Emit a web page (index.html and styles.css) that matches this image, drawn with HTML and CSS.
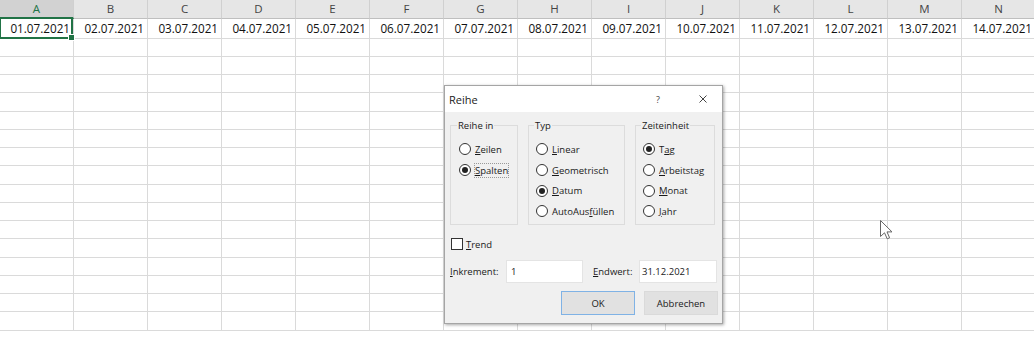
FILE: index.html
```html
<!DOCTYPE html>
<html lang="de">

<head>
    <meta charset="UTF-8">
    <meta name="viewport" content="width=device-width, initial-scale=1.0">
    <title>Reihe</title>
    <link rel="stylesheet" href="styles.css">
</head>

<body>
    <div class="sheet">
        <div class="row head">
            <div class="col-head active">A</div>
            <div class="col-head">B</div>
            <div class="col-head">C</div>
            <div class="col-head">D</div>
            <div class="col-head">E</div>
            <div class="col-head">F</div>
            <div class="col-head">G</div>
            <div class="col-head">H</div>
            <div class="col-head">I</div>
            <div class="col-head">J</div>
            <div class="col-head">K</div>
            <div class="col-head">L</div>
            <div class="col-head">M</div>
            <div class="col-head">N</div>
        </div>
        <div class="row first">
            <div class="cell">01.07.2021</div>
            <div class="cell">02.07.2021</div>
            <div class="cell">03.07.2021</div>
            <div class="cell">04.07.2021</div>
            <div class="cell">05.07.2021</div>
            <div class="cell">06.07.2021</div>
            <div class="cell">07.07.2021</div>
            <div class="cell">08.07.2021</div>
            <div class="cell">09.07.2021</div>
            <div class="cell">10.07.2021</div>
            <div class="cell">11.07.2021</div>
            <div class="cell">12.07.2021</div>
            <div class="cell">13.07.2021</div>
            <div class="cell">14.07.2021</div>
        </div>
        <div id="empty-rows"></div>
        <div class="selection"><span class="fill-handle"></span></div>
    </div>

    <div class="dialog">
        <div class="titlebar">
            <span class="title">Reihe</span>
            <span class="help">?</span>
            <span class="close">
                <svg width="8" height="8" viewBox="0 0 8 8">
                    <path d="M0.5 0.5 L7.5 7.5 M7.5 0.5 L0.5 7.5" stroke="#444" stroke-width="1" fill="none" />
                </svg>
            </span>
        </div>
        <div class="dialog-body">
            <div class="groups">
                <fieldset class="group group-in">
                    <legend>Reihe in</legend>
                    <div class="option"><span class="radio"></span><span><u>Z</u>eilen</span></div>
                    <div class="option"><span class="radio checked"></span><span class="focus"><u>S</u>palten</span></div>
                </fieldset>
                <fieldset class="group group-type">
                    <legend>Typ</legend>
                    <div class="option"><span class="radio"></span><span><u>L</u>inear</span></div>
                    <div class="option"><span class="radio"></span><span><u>G</u>eometrisch</span></div>
                    <div class="option"><span class="radio checked"></span><span><u>D</u>atum</span></div>
                    <div class="option"><span class="radio"></span><span>AutoAus<u>f</u>üllen</span></div>
                </fieldset>
                <fieldset class="group group-unit">
                    <legend>Zeiteinheit</legend>
                    <div class="option"><span class="radio checked"></span><span>T<u>a</u>g</span></div>
                    <div class="option"><span class="radio"></span><span><u>A</u>rbeitstag</span></div>
                    <div class="option"><span class="radio"></span><span><u>M</u>onat</span></div>
                    <div class="option"><span class="radio"></span><span><u>J</u>ahr</span></div>
                </fieldset>
            </div>
            <div class="trend"><span class="checkbox"></span><span><u>T</u>rend</span></div>
            <div class="fields">
                <span class="field-label label-inc"><u>I</u>nkrement:</span>
                <span class="input input-inc">1</span>
                <span class="field-label label-end"><u>E</u>ndwert:</span>
                <span class="input input-end">31.12.2021</span>
            </div>
            <div class="buttons">
                <button class="btn default">OK</button>
                <button class="btn">Abbrechen</button>
            </div>
        </div>
    </div>

    <svg class="cursor" width="13" height="20" viewBox="0 0 13 20">
        <path d="M0.5 0.5 L0.5 16.5 L4.5 12.8 L7.2 18.8 L9.6 17.8 L7 11.9 L12 11.9 Z" fill="#fff" stroke="#666" stroke-width="1" stroke-linejoin="round" />
    </svg>

    <script>
        // Fill the rest of the sheet with empty rows
        const emptyRows = document.getElementById('empty-rows');
        for (let r = 0; r < 16; r++) {
            const row = document.createElement('div');
            row.className = 'row';
            for (let c = 0; c < 14; c++) {
                const cell = document.createElement('div');
                cell.className = 'cell';
                row.appendChild(cell);
            }
            emptyRows.appendChild(row);
        }
    </script>
</body>

</html>
```

FILE: styles.css
```css
body {
    margin: 0;
    width: 1034px;
    height: 342px;
    overflow: hidden;
    background-color: #fff;
    font-family: "Open Sans", "Noto Sans", sans-serif;
    position: relative;
}

/* Spreadsheet */
.sheet {
    position: relative;
}

.row {
    display: flex;
    height: 18.27px;
}

.row.head {
    height: 19px;
}

.row.first {
    height: 19.5px;
}

.col-head,
.cell {
    flex: none;
    width: 74px;
    box-sizing: border-box;
    border-right: 1px solid #dadada;
    border-bottom: 1px solid #dadada;
}

.col-head {
    background-color: #e6e6e6;
    border-right-color: #d0d0d0;
    border-bottom-color: #bfbfbf;
    color: #444;
    font-size: 11.5px;
    line-height: 18px;
    text-align: center;
}

.col-head.active {
    background-color: #d2d2d2;
    color: #217346;
    border-bottom: 2px solid #217346;
    line-height: 17px;
}

.cell {
    font-size: 11.7px;
    line-height: 18px;
    text-align: right;
    padding-right: 3px;
    color: #111;
}

.selection {
    position: absolute;
    left: -1px;
    top: 17px;
    width: 74px;
    height: 22px;
    box-sizing: border-box;
    border: 2px solid #217346;
}

.fill-handle {
    position: absolute;
    right: -4px;
    bottom: -4px;
    width: 5px;
    height: 5px;
    background-color: #217346;
    border: 1px solid #fff;
}

/* Dialog */
.dialog {
    position: absolute;
    left: 444px;
    top: 85px;
    width: 279px;
    height: 239px;
    box-sizing: border-box;
    border: 1px solid #a5a5a5;
    background-color: #f0f0f0;
    box-shadow: 1px 1px 3px rgba(0, 0, 0, 0.35);
    font-size: 9.5px;
    color: #1a1a1a;
}

.titlebar {
    display: flex;
    align-items: center;
    height: 26px;
    background-color: #fff;
    padding-left: 4px;
}

.title {
    font-size: 11px;
    flex: 1;
}

.help {
    width: 20px;
    margin-right: 16px;
    text-align: center;
    font-size: 9px;
    color: #444;
}

.close {
    width: 38px;
    display: flex;
    justify-content: center;
}

.dialog-body {
    padding: 7px 4px 0 5px;
}

.groups {
    display: flex;
    gap: 10px;
}

.group {
    margin: 0;
    padding: 7px 0 0 7px;
    height: 106px;
    box-sizing: border-box;
    border: 1px solid #dcdcdc;
    min-width: 0;
}

.group legend {
    padding: 0 1px;
    margin-left: -2px;
    line-height: 13px;
}

.group-in {
    width: 68px;
    padding-left: 8px;
}

.group-type {
    width: 97px;
}

.group-unit {
    width: 80px;
}

.option {
    display: flex;
    align-items: center;
    height: 20.7px;
    white-space: nowrap;
}

.radio {
    flex: none;
    width: 12px;
    height: 12px;
    box-sizing: border-box;
    border: 1px solid #333;
    border-radius: 50%;
    background-color: #fff;
    margin-right: 4px;
    display: flex;
    align-items: center;
    justify-content: center;
}

.radio.checked::after {
    content: "";
    width: 6px;
    height: 6px;
    border-radius: 50%;
    background-color: #222;
}

.focus {
    outline: 1px dotted #999;
    outline-offset: 0;
}

.trend {
    display: flex;
    align-items: center;
    margin-top: 13px;
    height: 12px;
    margin-left: 1px;
}

.checkbox {
    width: 12px;
    height: 12px;
    box-sizing: border-box;
    border: 1px solid #333;
    background-color: #fff;
    margin-right: 3px;
}

.fields {
    display: flex;
    align-items: center;
    margin-top: 10px;
    height: 23px;
}

.field-label {
    flex: none;
}

.label-inc {
    width: 56px;
}

.label-end {
    width: 46px;
    margin-left: 10px;
}

.input {
    flex: none;
    height: 23px;
    box-sizing: border-box;
    border: 1px solid #e4e4e4;
    background-color: #fff;
    line-height: 21px;
    padding-left: 4px;
}

.input-inc {
    width: 77px;
}

.input-end {
    width: 78px;
    padding-left: 2px;
}

.buttons {
    display: flex;
    justify-content: flex-end;
    gap: 9px;
    margin-top: 8px;
}

.btn {
    width: 74px;
    height: 24px;
    font-family: inherit;
    font-size: 9.5px;
    color: #1a1a1a;
    background-color: #e1e1e1;
    border: 1px solid #dadada;
    padding: 0;
}

.btn.default {
    border-color: #7fb2e5;
}

.cursor {
    position: absolute;
    left: 880px;
    top: 220px;
}
```
